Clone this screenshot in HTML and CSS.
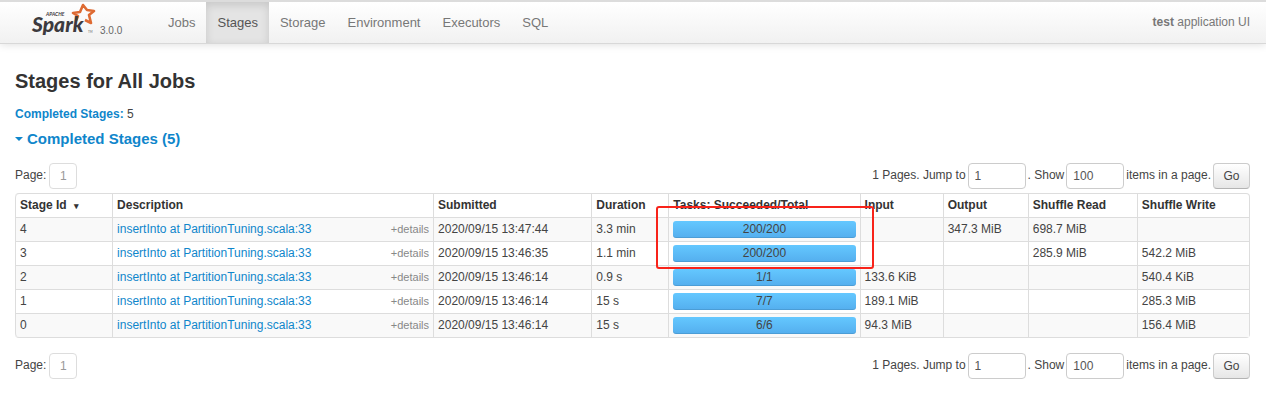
FILE: index.html
```html
<!DOCTYPE html>
<html lang="en">
<head>
<meta charset="utf-8">
<title>test - Stages for All Jobs</title>
<link rel="stylesheet" href="styles.css">
</head>
<body>
<header class="navbar">
  <a class="brand" href="#">
    <svg class="logo" width="66" height="36" viewBox="0 0 66 36" role="img" aria-label="Apache Spark">
      <path class="logo-star" d="M45 19 L47 14 L42 11 L49 10 L52 3 L56 8 L63 9 L58 13 L60 21 L54 18"/>
      <text class="logo-apache" x="15" y="14">APACHE</text>
      <text class="logo-word" x="1" y="30">Spark</text>
      <text class="logo-tm" x="57" y="31">TM</text>
    </svg>
    <span class="version">3.0.0</span>
  </a>
  <nav class="nav">
    <a href="#">Jobs</a>
    <a class="active" href="#">Stages</a>
    <a href="#">Storage</a>
    <a href="#">Environment</a>
    <a href="#">Executors</a>
    <a href="#">SQL</a>
  </nav>
  <p class="app-name"><strong>test</strong> application UI</p>
</header>
<main class="container">
  <h1>Stages for All Jobs</h1>
  <p class="summary"><a href="#completed"><strong>Completed Stages:</strong></a> 5</p>
  <h2 id="completed"><a href="#completed"><span class="caret"></span>Completed Stages (5)</a></h2>

  <div class="pager">
    <div class="pages">Page: <span class="page">1</span></div>
    <form class="jump">
      <label for="page-top">1 Pages. Jump to</label>
      <input id="page-top" type="text" value="1">
      <label class="show" for="size-top">. Show</label>
      <input id="size-top" type="text" value="100">
      <span>items in a page.</span>
      <button type="button">Go</button>
    </form>
  </div>

  <table class="stages">
    <colgroup>
      <col class="c-id"><col class="c-desc"><col class="c-sub"><col class="c-dur"><col class="c-tasks"><col class="c-in"><col class="c-out"><col class="c-read"><col class="c-write">
    </colgroup>
    <thead>
      <tr>
        <th>Stage Id <span class="sort">▾</span></th>
        <th>Description</th>
        <th>Submitted</th>
        <th>Duration</th>
        <th class="tasks">Tasks: Succeeded/Total<span class="highlight"></span></th>
        <th>Input</th>
        <th>Output</th>
        <th>Shuffle Read</th>
        <th>Shuffle Write</th>
      </tr>
    </thead>
    <tbody>
      <tr><td>4</td><td><div class="desc"><a href="#">insertInto at PartitionTuning.scala:33</a><span class="details">+details</span></div></td><td>2020/09/15 13:47:44</td><td>3.3 min</td><td><div class="bar">200/200</div></td><td></td><td>347.3 MiB</td><td>698.7 MiB</td><td></td></tr>
      <tr><td>3</td><td><div class="desc"><a href="#">insertInto at PartitionTuning.scala:33</a><span class="details">+details</span></div></td><td>2020/09/15 13:46:35</td><td>1.1 min</td><td><div class="bar">200/200</div></td><td></td><td></td><td>285.9 MiB</td><td>542.2 MiB</td></tr>
      <tr><td>2</td><td><div class="desc"><a href="#">insertInto at PartitionTuning.scala:33</a><span class="details">+details</span></div></td><td>2020/09/15 13:46:14</td><td>0.9 s</td><td><div class="bar">1/1</div></td><td>133.6 KiB</td><td></td><td></td><td>540.4 KiB</td></tr>
      <tr><td>1</td><td><div class="desc"><a href="#">insertInto at PartitionTuning.scala:33</a><span class="details">+details</span></div></td><td>2020/09/15 13:46:14</td><td>15 s</td><td><div class="bar">7/7</div></td><td>189.1 MiB</td><td></td><td></td><td>285.3 MiB</td></tr>
      <tr><td>0</td><td><div class="desc"><a href="#">insertInto at PartitionTuning.scala:33</a><span class="details">+details</span></div></td><td>2020/09/15 13:46:14</td><td>15 s</td><td><div class="bar">6/6</div></td><td>94.3 MiB</td><td></td><td></td><td>156.4 MiB</td></tr>
    </tbody>
  </table>

  <div class="pager">
    <div class="pages">Page: <span class="page">1</span></div>
    <form class="jump">
      <label for="page-bottom">1 Pages. Jump to</label>
      <input id="page-bottom" type="text" value="1">
      <label class="show" for="size-bottom">. Show</label>
      <input id="size-bottom" type="text" value="100">
      <span>items in a page.</span>
      <button type="button">Go</button>
    </form>
  </div>
</main>
</body>
</html>
```
FILE: styles.css
```css
* { box-sizing: border-box; }

body {
  margin: 0;
  background: #fff;
  color: #444;
  font: 12px/18px "Liberation Sans", Arial, sans-serif;
}

a { color: #0f86cb; text-decoration: none; }

.navbar {
  display: flex;
  height: 44px;
  padding: 0 16px 0 31px;
  border-top: 2px solid #dcdcdc;
  border-bottom: 1px solid #d8d8d8;
  background: linear-gradient(#fff, #f1f1f1);
  box-shadow: 0 1px 8px rgba(0, 0, 0, .12);
}

.brand { display: flex; width: 126px; color: #666; }
.logo { flex: none; overflow: visible; }
.logo-word { font: italic 900 21px Lato, sans-serif; fill: #3c3a3e; }
.logo-apache { font: italic bold 5px Lato, sans-serif; fill: #3c3a3e; }
.logo-tm { font: 3px Lato, sans-serif; fill: #666; }
.logo-star { fill: none; stroke: #de6a32; stroke-width: 2.6; stroke-linejoin: round; }
.version { padding: 20px 0 0 3px; font-size: 10px; }

.nav { display: flex; font-size: 13px; }
.nav a { padding: 12px 11px 0; color: #777; }
.nav .active {
  background: #e4e4e4;
  box-shadow: inset 0 3px 8px rgba(0, 0, 0, .13);
  color: #555;
}

.app-name { margin: 0 0 0 auto; padding-top: 11px; color: #777; }

.container { padding: 0 16px 0 15px; }

h1 { margin: 24px 0 10px; color: #333; font-size: 20px; line-height: 27px; }
.summary { margin: 0; }
h2 { margin: 6px 0 14px; font-size: 15px; line-height: 20px; }
h2 a { display: flex; align-items: center; gap: 4px; }
.caret { border: 4px solid transparent; border-top-color: #0f86cb; border-bottom: 0; }

.pager { display: flex; justify-content: space-between; align-items: flex-start; }
.pages { display: flex; gap: 3px; line-height: 24px; }
.page {
  width: 28px;
  height: 26px;
  border: 1px solid #ddd;
  border-radius: 4px;
  color: #999;
  text-align: center;
}
.jump { display: flex; gap: 2px; line-height: 24px; }
.jump input {
  width: 58px;
  height: 26px;
  padding: 0 6px;
  border: 1px solid #ccc;
  border-radius: 4px;
  background: #fff;
  color: #555;
  font: inherit;
}
.jump button {
  width: 37px;
  height: 26px;
  padding: 0;
  border: 1px solid #ccc;
  border-bottom-color: #b3b3b3;
  border-radius: 4px;
  background: linear-gradient(#fff, #e6e6e6);
  color: #444;
  font: inherit;
}

.stages {
  width: 100%;
  margin: 4px 0 15px;
  border: 1px solid #ddd;
  border-left: 0;
  border-radius: 4px;
  border-spacing: 0;
  table-layout: fixed;
}
.c-id { width: 97px; }
.c-desc { width: 26%; }
.c-sub { width: 158px; }
.c-dur { width: 77px; }
.c-tasks { width: 191px; }
.c-in { width: 83px; }
.c-out { width: 85px; }
.c-read { width: 109px; }
.c-write { width: 112px; }

th, td {
  height: 24px;
  padding: 0 4px 2px;
  border-left: 1px solid #ddd;
  line-height: 20px;
  text-align: left;
  white-space: nowrap;
}
th { height: 23px; color: #333; }
td { border-top: 1px solid #ddd; }
th:first-child { border-top-left-radius: 4px; }
tr:last-child td:first-child { border-bottom-left-radius: 4px; }
tbody tr:nth-child(odd) td { background: #f9f9f9; }
.sort { margin-left: 4px; font-size: 9px; line-height: 1; }

.desc { display: flex; justify-content: space-between; }
.details { color: #888; font-size: 11px; }

.bar {
  height: 17px;
  margin-top: 2px;
  border-radius: 3px;
  background: linear-gradient(#64c8ff, #54aeee);
  box-shadow: inset 0 -1px 0 rgba(0, 0, 0, .1);
  line-height: 17px;
  text-align: center;
}

.tasks { position: relative; }
.highlight {
  position: absolute;
  z-index: 1;
  top: 12px;
  left: -13px;
  right: -14px;
  height: 63px;
  border: 2px solid #f8231a;
  border-radius: 3px;
}
```
